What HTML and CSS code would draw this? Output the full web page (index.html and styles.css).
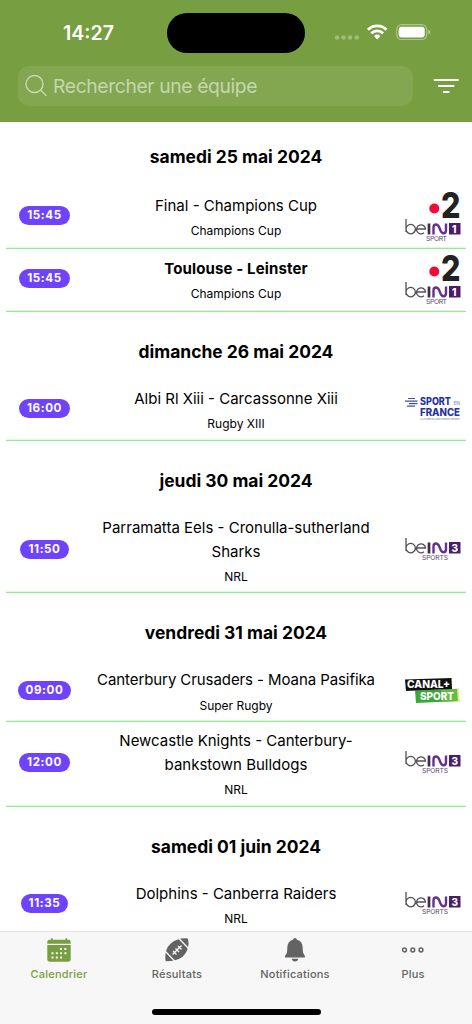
FILE: index.html
```html
<!DOCTYPE html>
<html lang="fr">
<head>
<meta charset="utf-8">
<title>Calendrier</title>
<link rel="stylesheet" href="styles.css">
</head>
<body>
<svg class="defs" width="0" height="0">
  <defs>
    <symbol id="bein" viewBox="0 0 56 24">
      <g fill="none" stroke-linecap="butt">
        <path stroke="#55505a" stroke-width="1.300" d="M1 0V13M1 10a4.700 4.700 0 1 1 0 .1M11.800 10H20.500a4.500 4.500 0 1 0-1.500 3.700"/>
        <path stroke="#452953" stroke-width="2.700" d="M24 4.500V15.500"/>
        <path stroke="#65318f" stroke-width="2.400" d="M28.500 15.500V8.500q0-3 2.500-3 2 0 3.300 3l1.200 3q1.200 2.700 3 2.700 2.500 0 2.500-3V4.500"/>
      </g>
      <path fill="#4b1d68" d="M44 4h11.500v11.500H44z"/>
    </symbol>
    <symbol id="france2" viewBox="0 0 56 30">
      <circle cx="29.300" cy="19.500" r="5" fill="#ef0b35"/>
      <text x="36" y="28.500" font-size="36" font-weight="800" fill="#222" textLength="19.500" lengthAdjust="spacingAndGlyphs">2</text>
    </symbol>
  </defs>
</svg>
<div class="app">
  <header class="header">
    <div class="status">
      <span class="clock">14:27</span>
      <span class="island"></span>
      <svg class="signals" width="98" height="20" viewBox="0 0 98 20">
        <g fill="#fff" opacity=".3"><circle cx="3" cy="14.500" r="2.300"/><circle cx="9.500" cy="14.500" r="2.300"/><circle cx="16" cy="14.500" r="2.300"/><circle cx="22.700" cy="14.500" r="2.300"/></g>
        <g fill="none" stroke="#fff" stroke-width="2.700"><path d="M33.900 6.800a13.100 13.100 0 0 1 18.600 0"/><path d="M37.300 10.300a8.400 8.400 0 0 1 11.800 0"/></g>
        <path fill="#fff" d="M43.200 16.500l-3.200-3.400a4.700 4.700 0 0 1 6.400 0z"/>
        <rect x="62.700" y="1.700" width="30" height="14.800" rx="4.800" fill="none" stroke="#fff" stroke-opacity=".4" stroke-width="1.200"/>
        <rect x="64.700" y="3.800" width="26" height="10.600" rx="3" fill="#fff"/>
        <path fill="#fff" opacity=".5" d="M94.500 6.500q1.900 1 1.900 2.600t-1.900 2.600z"/>
      </svg>
    </div>
    <div class="toolbar">
      <div class="search">
        <svg width="24" height="24" viewBox="0 0 24 24" fill="none" stroke="#c9dbb7" stroke-width="1.300"><circle cx="9.500" cy="10" r="8.500"/><path d="M15.500 16l6 6"/></svg>
        <span class="placeholder">Rechercher une équipe</span>
      </div>
      <svg class="filter" width="26" height="16" viewBox="0 0 26 16" stroke="#fff" stroke-width="1.800" stroke-linecap="round"><path d="M1.500 2H25M5.800 8H20.600M10.800 14H15.700"/></svg>
    </div>
  </header>

  <main class="list">
    <section class="day">
      <h2 class="date first">samedi 25 mai 2024</h2>
      <article class="match stacked">
        <span class="slot"><span class="pill">15:45</span></span>
        <div class="info"><p class="teams">Final - Champions Cup</p><p class="league">Champions Cup</p></div>
        <div class="channels">
          <svg width="56" height="30"><use href="#france2"/></svg>
          <svg width="56" height="24"><use href="#bein"/><text x="47" y="13.500" class="num">1</text><text x="21" y="21.500" class="sport" textLength="21">SPORT</text></svg>
        </div>
      </article>
      <article class="match stacked">
        <span class="slot"><span class="pill">15:45</span></span>
        <div class="info"><p class="teams live">Toulouse - Leinster</p><p class="league">Champions Cup</p></div>
        <div class="channels">
          <svg width="56" height="30"><use href="#france2"/></svg>
          <svg width="56" height="24"><use href="#bein"/><text x="47" y="13.500" class="num">1</text><text x="21" y="21.500" class="sport" textLength="21">SPORT</text></svg>
        </div>
      </article>
    </section>
    <section class="day">
      <h2 class="date">dimanche 26 mai 2024</h2>
      <article class="match">
        <span class="slot"><span class="pill">16:00</span></span>
        <div class="info"><p class="teams">Albi Rl Xiii - Carcassonne Xiii</p><p class="league">Rugby XIII</p></div>
        <div class="channels">
          <svg width="56" height="26" viewBox="0 0 56 26">
            <path stroke="#4350a5" stroke-width="1.200" d="M3 2.500H10M0 5.200H12.500M4 7.700H12.500M2 10.200H10"/>
            <g fill="#26349a" font-weight="800" font-size="10"><text x="15" y="9" textLength="31" lengthAdjust="spacingAndGlyphs">SPORT</text><text x="15" y="19.500" textLength="40" lengthAdjust="spacingAndGlyphs">FRANCE</text></g>
            <text x="48.500" y="9" font-size="5" fill="#7984bd" textLength="6.500">EN</text>
            <text x="15" y="24" font-size="2.700" fill="#7984bd" textLength="40">LA CHAÎNE DU MOUVEMENT SPORTIF</text>
          </svg>
        </div>
      </article>
    </section>
    <section class="day">
      <h2 class="date">jeudi 30 mai 2024</h2>
      <article class="match double">
        <span class="slot"><span class="pill">11:50</span></span>
        <div class="info"><p class="teams">Parramatta Eels - Cronulla-sutherland<br>Sharks</p><p class="league">NRL</p></div>
        <div class="channels"><svg width="56" height="24"><use href="#bein"/><text x="46.500" y="13.500" class="num">3</text><text x="17" y="21.500" class="sport" textLength="26">SPORTS</text></svg></div>
      </article>
    </section>
    <section class="day">
      <h2 class="date">vendredi 31 mai 2024</h2>
      <article class="match">
        <span class="slot"><span class="pill">09:00</span></span>
        <div class="info"><p class="teams tight">Canterbury Crusaders - Moana Pasifika</p><p class="league">Super Rugby</p></div>
        <div class="channels">
          <svg width="56" height="26" viewBox="0 0 56 26">
            <path fill="#d9f394" d="M50 10.500l3.500-.5 1.500 14-12-1z"/>
            <path fill="#39a935" d="M10 12.500l42-1.500.5 12L11 25z"/>
            <path fill="#64bd43" d="M36 11.600l16-.6.5 12-16 1z"/>
            <path fill="#111" d="M0 1.500l46.500-1.500.5 11L1 13z"/>
            <text x="2" y="10.200" font-size="10.500" font-weight="800" fill="#fff" textLength="43" lengthAdjust="spacingAndGlyphs">CANAL+</text>
            <text x="15" y="21.800" font-size="10.500" font-weight="800" fill="#fff" textLength="34" lengthAdjust="spacingAndGlyphs">SPORT</text>
          </svg>
        </div>
      </article>
      <article class="match double">
        <span class="slot"><span class="pill">12:00</span></span>
        <div class="info"><p class="teams">Newcastle Knights - Canterbury-<br>bankstown Bulldogs</p><p class="league">NRL</p></div>
        <div class="channels"><svg width="56" height="24"><use href="#bein"/><text x="46.500" y="13.500" class="num">3</text><text x="17" y="21.500" class="sport" textLength="26">SPORTS</text></svg></div>
      </article>
    </section>
    <section class="day">
      <h2 class="date">samedi 01 juin 2024</h2>
      <article class="match">
        <span class="slot"><span class="pill">11:35</span></span>
        <div class="info"><p class="teams">Dolphins - Canberra Raiders</p><p class="league">NRL</p></div>
        <div class="channels"><svg width="56" height="24"><use href="#bein"/><text x="46.500" y="13.500" class="num">3</text><text x="17" y="21.500" class="sport" textLength="26">SPORTS</text></svg></div>
      </article>
    </section>
  </main>

  <footer class="footer">
    <nav class="tabs">
      <a class="tab active">
        <svg width="26" height="26" viewBox="0 0 26 26">
          <path fill="currentColor" d="M1.300 6.700V5q0-2.300 2.300-2.300H5V1.300h1.700v1.400h12.800V1.300h1.700v1.400h1.200q2.300 0 2.300 2.300v1.700zM1.300 8h23.400v14q0 2.700-2.700 2.700H4q-2.700 0-2.700-2.700z"/>
          <path stroke="#f7f7f7" stroke-width="2" stroke-dasharray="2 2.300" d="M14 12h7M5.500 16.200h15.300M5.500 20.400h11"/>
        </svg>
        <span>Calendrier</span>
      </a>
      <a class="tab">
        <svg width="26" height="26" viewBox="0 0 26 26">
          <path fill="currentColor" d="M24 2q1.700 7-2.300 14-4.700 8-18.700 8.300-1.500 0-1.600-1.600Q.5 12 6.500 6.700 13 .7 22.500 1.200 24 1.200 24 2z"/>
          <g fill="none" stroke="#f7f7f7" stroke-width="1.300"><path d="M1.500 14.500l10 10.500M14 .5l11 11.500M8.500 17.500l9-9M9 14l3.500 3.500M11.500 11.500l3.500 3.500M14 9l3.500 3.500"/></g>
        </svg>
        <span>Résultats</span>
      </a>
      <a class="tab">
        <svg width="26" height="26" viewBox="0 0 26 26" fill="currentColor">
          <path d="M13 1q1.600 0 2 1.700 5.700 1.500 5.700 8.300 0 5 1.300 6.500l1 1.400q.6 1.600-1 1.600H4q-1.600 0-1-1.600l1-1.400Q5.300 16 5.300 11q0-6.800 5.700-8.300Q11.400 1 13 1zM9.500 21.800h7Q15.700 24.500 13 24.500t-3.500-2.700z"/>
        </svg>
        <span>Notifications</span>
      </a>
      <a class="tab">
        <svg width="26" height="26" viewBox="0 0 26 26" fill="none" stroke="currentColor" stroke-width="1.500"><circle cx="4.500" cy="13" r="1.900"/><circle cx="12.800" cy="13" r="1.900"/><circle cx="21" cy="13" r="1.900"/></svg>
        <span>Plus</span>
      </a>
    </nav>
    <div class="home"></div>
  </footer>
</div>
</body>
</html>
```

FILE: styles.css
```css
* { box-sizing: border-box; }
body { margin: 0; background: #fff; color: #000; font-family: Inter, "Liberation Sans", sans-serif; }
p, h2 { margin: 0; }
svg { display: block; flex: none; overflow: visible; }
.defs { position: absolute; }
.app { width: 472px; height: 1024px; display: flex; flex-direction: column; overflow: hidden; }

.header { height: 122px; flex: none; background: #779e40; }
.status { height: 66px; display: grid; grid-template-columns: 167px 138px 1fr; align-items: center; }
.clock { padding-left: 10px; text-align: center; font-size: 19.500px; font-weight: 600; color: #fff; }
.island { height: 40px; border-radius: 20px; background: #000; }
.signals { margin-left: 29px; }
.toolbar { display: flex; align-items: center; padding-left: 18px; }
.search { width: 395px; height: 40px; border-radius: 11px; background: #83a650; display: flex; align-items: center; padding-left: 7px; gap: 4px; }
.placeholder { font-size: 19.300px; color: #c5d7ae; letter-spacing: -.370px; }
.filter { margin-left: 20px; }

.list { flex: 1; min-height: 0; overflow: hidden; }
.date { height: 68px; line-height: 80px; text-align: center; font-size: 17.450px; font-weight: 700; }
.date.first { height: 63px; line-height: 69px; }
.match { height: 60.500px; margin: 0 6px; display: grid; grid-template-columns: 77px 1fr 77px; border-bottom: 1px solid #90ee90; box-shadow: inset 0 -1px #dcfadc; }
.match.stacked { height: 63.500px; }
.match.double { height: 84.800px; }
.slot { display: flex; align-items: center; justify-content: center; padding-bottom: 2px; }
.pill { height: 19px; line-height: 19px; padding: 0 8px; border-radius: 10px; background: #6f43fb; color: #fff; font-size: 11.600px; font-weight: 700; letter-spacing: .6px; }
.info { padding-top: 7px; text-align: center; white-space: nowrap; }
.stacked .info { padding-top: 8.500px; }
.teams { font-size: 15px; line-height: 24.300px; }
.tight { letter-spacing: -.080px; }
.live { font-weight: 700; letter-spacing: .130px; }
.league { font-size: 12px; line-height: 26px; }
.channels { display: flex; flex-direction: column; align-items: center; justify-content: center; padding: 0 0 1px 11px; }
.num { font-size: 10px; font-weight: 800; fill: #fff; }
.sport { font-size: 6.800px; fill: #60496f; }

.footer { height: 93px; flex: none; background: #f7f7f7; border-top: 1px solid #e2e2e2; }
.tabs { height: 77px; display: grid; grid-template-columns: repeat(4, 1fr); }
.tab { display: flex; flex-direction: column; align-items: center; padding-top: 5px; gap: 4px; color: #636363; font-size: 11px; font-weight: 500; line-height: 14px; letter-spacing: .2px; }
.active { color: #779e40; }
.home { width: 169px; height: 6px; margin: 0 auto; border-radius: 3px; background: #000; }
```
